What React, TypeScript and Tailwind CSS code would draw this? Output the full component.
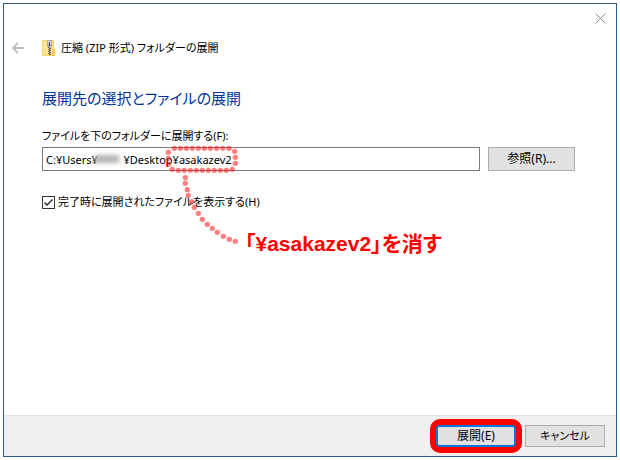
import { useState } from 'react';

const BOX_DOTS = [
    [43, 25], [61, 25], [79, 25], [97, 25], [115, 25], [133, 25], [151, 25], [170, 25], [188, 25], [207, 25],
    [224, 34], [226, 52], [226, 70],
    [217, 88], [199, 91], [181, 91], [163, 91], [145, 91], [127, 91], [109, 91], [91, 91], [73, 91], [55, 91], [37, 88],
    [25, 73], [25, 55], [25, 37],
];

const TAIL_DOTS = [
    [76, 113], [76, 130], [82, 149], [85, 166], [95, 185], [103, 202], [115, 220],
    [127, 238], [142, 253], [157, 265], [172, 277], [190, 289], [208, 298], [226, 304],
];

function ZipIcon() {
    return (
        <svg width="14" height="16" viewBox="0 0 14 16" shapeRendering="crispEdges" aria-hidden="true">
            <rect x="0" y="0" width="12" height="16" fill="#f7d469" />
            <rect x="1" y="1" width="10" height="14" fill="#ffe390" />
            <rect x="10" y="9" width="3" height="7" fill="#efc34d" />
            <rect x="11" y="10" width="1" height="5" fill="#fbe08a" />
            <rect x="5" y="0" width="5" height="7" fill="#a9a9a9" />
            <rect x="6" y="1" width="3" height="3" fill="#d7dbe0" />
            <rect x="7" y="2" width="1" height="4" fill="#4a4a4a" />
            {[7, 9, 11, 13].map((y) => (
                <g key={y}>
                    <rect x="6" y={y} width="2" height="1" fill="#777" />
                    <rect x="7" y={y + 1} width="2" height="1" fill="#555" />
                </g>
            ))}
        </svg>
    );
}

/* Dotted frame around the last folder name, with a tail to the note */
function Callout() {
    return (
        <svg
            className="pointer-events-none absolute -top-[7px] left-[118px] h-[110px] w-[80px]"
            viewBox="0 0 240 330"
            fill="#ff0000"
            fillOpacity="0.5"
            aria-hidden="true"
        >
            {[...BOX_DOTS, ...TAIL_DOTS].map(([x, y]) => (
                <circle key={`${x}-${y}`} cx={x} cy={y} r="8" />
            ))}
        </svg>
    );
}

export default function App() {
    const [path, setPath] = useState('C:¥Users¥\u00a0\u00a0\u00a0\u00a0\u00a0\u00a0\u00a0\u00a0\u00a0¥Desktop¥asakazev2');
    const [showFiles, setShowFiles] = useState(true);

    return (
        <div className="flex min-h-screen bg-white p-[3px] font-['Noto_Sans','Noto_Sans_CJK_JP',sans-serif] text-[11px] leading-4 text-black [font-feature-settings:'palt']">
            <div className="flex flex-1 flex-col border border-[#2a5d88]">
                <header>
                    <div className="flex h-7 items-center justify-end pr-[10px]">
                        <button type="button" aria-label="閉じる">
                            <svg width="11" height="11" viewBox="0 0 11 11" stroke="#8c8c8c" aria-hidden="true">
                                <path d="M0.5 0.5L10.5 10.5M10.5 0.5L0.5 10.5" />
                            </svg>
                        </button>
                    </div>
                    <div className="flex h-8 items-center pl-2">
                        <button type="button" aria-label="戻る" className="mr-[18px]">
                            <svg width="12" height="12" viewBox="0 0 12 12" fill="none" stroke="#bcbcbc" strokeWidth="1.8" aria-hidden="true">
                                <path d="M6 1L1 6L6 11M1 6H12" />
                            </svg>
                        </button>
                        <ZipIcon />
                        <span className="ml-[5px]">圧縮 (ZIP 形式) フォルダーの展開</span>
                    </div>
                </header>

                <main className="flex-1 pr-[41px] pl-[38px]">
                    <h1 className="mt-6 text-[15px] leading-5 text-[#003399]">展開先の選択とファイルの展開</h1>
                    <label htmlFor="path" className="mt-5 block">ファイルを下のフォルダーに展開する(F):</label>
                    <div className="relative mt-[3px] flex items-center gap-2">
                        <input
                            id="path"
                            type="text"
                            value={path}
                            onChange={(e) => setPath(e.target.value)}
                            className="h-6 min-w-0 flex-1 border border-[#7a7a7a] bg-white px-[3px] outline-none"
                        />
                        {/* user name is masked */}
                        <span className="absolute top-2 left-[53px] h-2 w-6 bg-[#b4b4b4] blur-[2px]" />
                        <button type="button" className="h-6 w-[87px] border border-[#adadad] bg-[#e1e1e1] text-xs">参照(R)...</button>
                        <Callout />
                    </div>
                    <label className="mt-[23px] flex items-center gap-[3px]">
                        <span className="relative h-[13px] w-[13px]">
                            <input
                                type="checkbox"
                                checked={showFiles}
                                onChange={(e) => setShowFiles(e.target.checked)}
                                className="peer block h-full w-full appearance-none border border-[#333] bg-white"
                            />
                            <svg
                                className="pointer-events-none absolute inset-0 hidden peer-checked:block"
                                width="13"
                                height="13"
                                viewBox="0 0 13 13"
                                fill="none"
                                stroke="#222"
                                strokeWidth="1.3"
                                aria-hidden="true"
                            >
                                <path d="M2.5 6.5L5 9L10.5 3.5" />
                            </svg>
                        </span>
                        完了時に展開されたファイルを表示する(H)
                    </label>
                    <p className="mt-5 ml-[203px] font-['Liberation_Sans','Noto_Sans_CJK_JP',sans-serif] text-[21px] leading-7 font-bold text-[#ff0000]">
                        「¥asakazev2」を消す
                    </p>
                </main>

                <footer className="flex justify-end gap-[9px] border-t border-[#dfdfdf] bg-[#f0f0f0] pt-[9px] pr-[11px] pb-[9px]">
                    <div className="relative">
                        <button type="submit" className="h-[22px] w-20 border-2 border-[#0078d7] bg-[#e1e1e1] text-xs">展開(E)</button>
                        <span className="pointer-events-none absolute -inset-[6px] rounded-[10px] border-6 border-[#ff0000]" />
                    </div>
                    <button type="button" className="h-[22px] w-20 border border-[#adadad] bg-[#e1e1e1] text-[11px]">キャンセル</button>
                </footer>
            </div>
        </div>
    );
}
